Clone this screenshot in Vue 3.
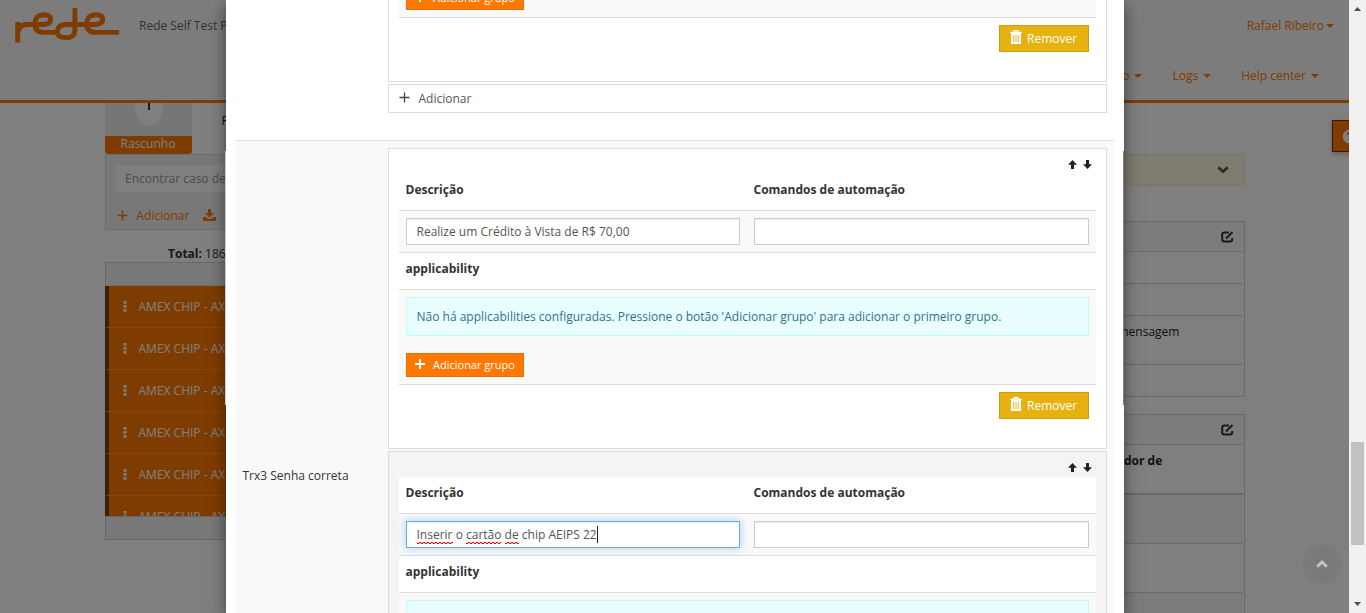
<script setup>
const cases = ['AMEX CHIP - AX', 'AMEX CHIP - AX', 'AMEX CHIP - AX', 'AMEX CHIP - AX', 'AMEX CHIP - AX', 'AMEX CHIP - AX']
const steps = [
  { words: [{ t: 'Realize um Crédito à Vista de R$ 70,00' }], active: false },
  {
    words: [
      { t: 'Inserir', bad: true }, { t: ' o ' }, { t: 'cartão', bad: true }, { t: ' ' },
      { t: 'de', bad: true }, { t: ' chip AEIPS 22' },
    ],
    active: true,
  },
]
</script>

<template>
  <div class="screen">
    <div class="page">
      <header class="top">
        <div class="brand">
          <svg class="logo" width="106" height="36" viewBox="0 0 106 36" fill="none" stroke="#ff7800" stroke-width="4.900">
            <path d="M3.700 34.500V14M3.700 27C3.700 19.500 7 16.500 13 16.500H27C34 16.500 36.700 14.500 36.700 11.400C36.700 8.200 34.500 6.800 30 6.800C23 6.800 20.800 11 20.800 15.700C20.800 21.500 24 24.400 30 24.400H43" />
            <path d="M60.900 0V21.500C60.900 27.500 58 29.600 52 29.600C45.500 29.600 43.400 27.500 43.400 24C43.400 19 47 16.500 53 16.500H79C86 16.500 88.700 14.500 88.700 11.400C88.700 8.200 86.500 6.800 82 6.800C75 6.800 72.600 11 72.600 15.700C72.600 21.500 76 24.400 82 24.400H105.200" />
          </svg>
          <span class="product">Rede Self Test Platform</span>
        </div>
        <div class="menus">
          <div class="user">Rafael Ribeiro<i class="caret near"></i></div>
          <nav class="nav">
            <span>Configuração<i class="caret"></i></span>
            <span>Logs<i class="caret"></i></span>
            <span>Help center<i class="caret"></i></span>
          </nav>
        </div>
      </header>

      <div class="columns">
        <aside class="left">
          <div class="tile-row">
            <div class="tile">
              <div class="disc-wrap"><div class="disc"><i></i></div></div>
              <div class="status">Rascunho</div>
            </div>
            <span class="tile-title">Rede</span>
          </div>
          <div class="finder">
            <div class="find">Encontrar caso de teste</div>
            <div class="links">
              <svg width="11" height="11" viewBox="0 0 11 11"><path d="M5.500 .5v10M.5 5.500h10" stroke="#ff7800" stroke-width="1.700" /></svg>
              <span class="add">Adicionar</span>
              <svg width="13" height="13" viewBox="0 0 13 13" fill="#ff7800"><path d="M5 0h3v4h3L6.500 8.500 2 4h3zM0 8h3l2 2h3l2-2h3v4H0z" /></svg>
              <span class="imp">Importar</span>
            </div>
          </div>
          <div class="total"><b>Total:</b> 186</div>
          <div class="list">
            <div class="list-head"></div>
            <div class="list-body">
              <div v-for="(c, i) in cases" :key="i" class="case">
                <svg width="4" height="11" viewBox="0 0 4 11" fill="#fff"><path d="M.5 0h3v2.700h-3zM.5 4h3v2.700h-3zM.5 8h3v2.700h-3z" /></svg>
                <span>{{ c }}</span>
              </div>
            </div>
            <div class="list-foot"></div>
          </div>
        </aside>

        <section class="right">
          <div class="notice">
            <svg width="12" height="8" viewBox="0 0 12 8" fill="none"><path d="M1.300 1.300 6 5.700l4.700-4.400" stroke="#6b5327" stroke-width="2.700" /></svg>
          </div>
          <div class="card one">
            <div class="card-head">
              <svg class="edit" width="13" height="12" viewBox="0 0 13 12" fill="none" stroke="#333"><path d="M8 1.500H3.500Q1.200 1.500 1.200 3.500v5q0 2 2 2h6q2 0 2-2V7" stroke-width="2" /><path d="M5 7.500 11.500 1" stroke-width="1.900" /></svg>
            </div>
            <div class="line l32"></div>
            <div class="line l32"></div>
            <div class="line l49"><span>mensagem</span></div>
          </div>
          <div class="card two">
            <div class="card-head">
              <svg class="edit" width="13" height="12" viewBox="0 0 13 12" fill="none" stroke="#333"><path d="M8 1.500H3.500Q1.200 1.500 1.200 3.500v5q0 2 2 2h6q2 0 2-2V7" stroke-width="2" /><path d="M5 7.500 11.500 1" stroke-width="1.900" /></svg>
            </div>
            <div class="line thick"><b>dor de</b></div>
            <div class="line l49 odd"></div>
            <div class="line l49"></div>
            <div class="line l49 odd"></div>
          </div>
        </section>
      </div>

      <div class="help">
        <svg width="15" height="15" viewBox="0 0 15 15"><circle cx="7.500" cy="7.500" r="6.700" fill="#fff" /><path d="M5.300 5.800Q5.500 3.700 7.600 3.700T9.700 5.600Q9.700 6.800 7.600 7.800V9M7.600 10v1.800" fill="none" stroke="#ff7800" stroke-width="1.800" /></svg>
      </div>
    </div>

    <div class="backdrop"></div>
    <div class="to-top">
      <svg width="12" height="8" viewBox="0 0 12 8" fill="none"><path d="M1.200 6.700 6 2l4.800 4.700" stroke="#c5c5c5" stroke-width="2.800" /></svg>
    </div>

    <div class="modal">
      <div class="item first">
        <div class="cut">
          <button class="btn"><svg width="10" height="10" viewBox="0 0 10 10"><path d="M5 0v10M0 5h10" stroke="#fff" stroke-width="2" /></svg>Adicionar grupo</button>
        </div>
        <button class="remove">
          <svg width="12" height="14" viewBox="0 0 12 14"><path d="M4 2V.6h4V2M0 2.500h12" fill="none" stroke="#fff" stroke-width="1.300" /><path d="M1 3h10v11H1z" fill="#fff" /><path d="M3.700 5v7M6 5v7M8.300 5v7" stroke="#e7b10f" stroke-width=".9" /></svg>Remover
        </button>
      </div>
      <div class="adder"><svg width="11" height="11" viewBox="0 0 11 11"><path d="M5.500 .5v10M.5 5.500h10" stroke="#444" stroke-width="1.300" /></svg>Adicionar</div>

      <div class="group">
        <div class="label">Trx3 Senha correta</div>
        <div class="items">
          <div v-for="(s, i) in steps" :key="i" class="item step" :class="{ active: s.active }">
            <div class="sort">
              <svg width="9" height="9" viewBox="0 0 9 9" fill="#222"><path d="M4.500 0 9 4.700H6V9H3V4.700H0z" /></svg>
              <svg width="9" height="9" viewBox="0 0 9 9" fill="#222"><path d="M4.500 9 9 4.300H6V0H3v4.300H0z" /></svg>
            </div>
            <div class="table">
              <div class="th two-col"><span>Descrição</span><span>Comandos de automação</span></div>
              <div class="td two-col fields">
                <div class="field" :class="{ focus: s.active }"><span v-for="(w, j) in s.words" :key="j" :class="{ bad: w.bad }">{{ w.t }}</span><i v-if="s.active" class="cursor"></i></div>
                <div class="field"></div>
              </div>
              <div class="th app"><span>applicability</span></div>
              <div class="td groups">
                <div class="info">Não há applicabilities configuradas. Pressione o botão 'Adicionar grupo' para adicionar o primeiro grupo.</div>
                <button class="btn"><svg width="10" height="10" viewBox="0 0 10 10"><path d="M5 0v10M0 5h10" stroke="#fff" stroke-width="2" /></svg>Adicionar grupo</button>
              </div>
            </div>
            <button class="remove">
              <svg width="12" height="14" viewBox="0 0 12 14"><path d="M4 2V.6h4V2M0 2.500h12" fill="none" stroke="#fff" stroke-width="1.300" /><path d="M1 3h10v11H1z" fill="#fff" /><path d="M3.700 5v7M6 5v7M8.300 5v7" stroke="#e7b10f" stroke-width=".9" /></svg>Remover
            </button>
          </div>
        </div>
      </div>
    </div>
    <i class="edge edge-l"></i>
    <i class="edge edge-r"></i>

    <div class="scrollbar">
      <svg width="7" height="4" viewBox="0 0 7 4"><path d="M3.500 0 7 4H0z" fill="#505050" /></svg>
      <div class="thumb"></div>
      <svg width="7" height="4" viewBox="0 0 7 4"><path d="M3.500 4 7 0H0z" fill="#505050" /></svg>
    </div>
  </div>
</template>

<style>
body { margin: 0; overflow: hidden; }
</style>

<style scoped>
* { box-sizing: border-box; }
.screen { position: relative; width: 1366px; height: 613px; overflow: hidden; background: #fff; font: 12px/18px "Open Sans", sans-serif; color: #333; white-space: nowrap; }
.page { position: relative; width: 1349px; height: 613px; overflow: hidden; }
.top { display: flex; justify-content: space-between; height: 103px; background: #f9f9f9; border-bottom: 3px solid #ff7800; }
.brand { display: flex; align-items: flex-start; padding: 8px 0 0 14px; }
.product { margin: 9px 0 0 19px; color: #666; }
.menus { color: #ff7800; text-align: right; }
.user { margin: 17px 15px 0 0; }
.nav { display: flex; gap: 30px; margin: 32px 30px 0 0; }
.caret { display: inline-block; border: 4px solid transparent; border-top-color: #ff7800; border-bottom: 0; margin-left: 5px; vertical-align: 2px; }
.caret.near { margin-left: 2px; }
.columns { display: flex; justify-content: space-between; padding: 0 104px 0 105px; }
.left { width: 300px; }
.tile-row { display: flex; height: 51px; }
.tile { width: 87px; background: #ededed; border-radius: 0 0 3px 3px; overflow: hidden; }
.disc-wrap { height: 33px; display: flex; justify-content: center; align-items: flex-end; padding-bottom: 10px; overflow: hidden; }
.disc { width: 30px; height: 50px; flex: none; border-radius: 50%; background: #fff; display: flex; justify-content: center; }
.disc i { width: 2px; height: 34px; background: #334; }
.status { height: 18px; line-height: 16px; background: #ff7800; color: #fff; text-align: center; padding-right: 1px; }
.tile-title { margin: 9px 0 0 29.500px; color: #222; }
.finder { height: 76px; border: 1px solid #d8d8d8; background: #f1f1f1; padding: 10px; }
.find { height: 27px; background: #fff; padding: 0 9px; line-height: 28px; color: #999; }
.links { display: flex; align-items: center; margin-top: 15px; color: #ff7800; height: 18px; padding-left: .5px; }
.links svg { margin-top: -2px; }
.links .add { margin: 0 13.500px 0 9px; }
.links .imp { margin-left: 8px; }
.total { padding: 15px 0 0 63px; height: 32px; }
.list { height: 278px; border: 1px solid #d0d0d0; background: #f1f1f1; }
.list-head { height: 23px; border-bottom: 1px solid #d8d8d8; }
.list-body { height: 230px; overflow: hidden; margin-left: -1px; }
.case { height: 42px; display: flex; align-items: center; background: #ff7800; border-left: 4px solid #7c3b00; border-bottom: 1px solid #ff942f; color: #fff; padding-left: 13.500px; }
.case span { margin-left: 12px; }
.list-foot { border-top: 1px solid #ccc; height: 23px; }
.right { width: 300px; padding-top: 51px; }
.notice { height: 32px; background: #fcf6e2; border: 1px solid #f5e8c8; display: flex; align-items: center; justify-content: flex-end; padding-right: 15.500px; }
.card { border: 1px solid #d5d5d5; background: #fff; }
.one { height: 176px; margin-top: 35px; }
.two { height: 220px; margin-top: 17px; }
.card-head { height: 30px; background: #f8f8f8; border-bottom: 1px solid #d8d8d8; display: flex; align-items: center; justify-content: flex-end; padding-right: 10px; }
.line { margin-right: 1px; border-bottom: 1px solid #d5d5d5; padding: 7px 0 0 175px; }
.l32 { height: 32px; }
.l49 { height: 49px; }
.line b, .line span { display: block; color: #222; }
.l49 span { margin-left: -3.500px; }
.thick { height: 50px; border-bottom-width: 2px; padding-left: 178px; }
.odd { background: #f7f7f7; }
.help { position: absolute; left: 1332px; top: 120px; width: 60px; height: 32px; padding: 8px 0 0 9px; background: #ff7800; border: 1px solid #633000; box-shadow: 0 2px 5px rgba(0,0,0,.25); }
.help svg { display: block; }
.backdrop { position: absolute; inset: 0; background: rgba(0,0,0,.5); }
.to-top { position: absolute; left: 1303px; top: 545px; width: 38px; height: 38px; border-radius: 50%; background: #7a7a7a; display: flex; align-items: center; justify-content: center; padding-bottom: 1px; }
.modal { position: absolute; left: 226px; top: 0; width: 898px; height: 613px; overflow: hidden; background: #fff; box-shadow: 0 5px 15px rgba(0,0,0,.5); }
.edge { position: absolute; top: 151px; height: 254px; width: 1px; }
.edge-l { left: 225px; background: #ccc; }
.edge-r { left: 1123px; background: #808080; }
.item { width: 719px; border: 1px solid #ddd; background: #fff; padding: 0 10px; }
.first { margin-left: 162px; height: 82px; border-top: 0; }
.cut { height: 18px; display: flex; flex-direction: column; justify-content: flex-end; padding: 0 7px 7px; background: #f9f9f9; border-bottom: 1px solid #ddd; }
.btn, .remove { font: 12px/18px "Open Sans", sans-serif; color: #fff; display: flex; align-items: center; padding: 0; }
.btn { flex: none; width: 118px; height: 24px; border: 1px solid #ea6e00; background: #ff7800; padding-left: 8px; font-size: 11px; }
.btn svg { margin: -2px 8px 0 0; }
.remove { margin: 7px 7px 0 auto; width: 90px; height: 27px; border: 1px solid #cf9e10; background: #e7b10f; padding-left: 10px; }
.remove svg { margin: -3px 5px 0 0; }
.adder { margin: 2px 0 0 162px; width: 719px; height: 29px; border: 1px solid #ddd; display: flex; align-items: center; padding-left: 10px; color: #555; }
.adder svg { margin: -2px 8.500px 0 0; }
.group { margin: 27px 10px 0; height: 610px; border-top: 1px solid #ddd; background: #f9f9f9; display: flex; }
.label { width: 152px; padding: 326px 0 0 6.500px; }
.items { padding-top: 7px; }
.step { height: 301px; margin-bottom: 2px; }
.sort { height: 25px; display: flex; justify-content: flex-end; gap: 6px; padding: 11px 4px 0 0; }
.active { background: #f4f4f4; }
.table { background: #fff; }
.th { height: 37px; padding: 7px 6.500px; font-weight: bold; border-bottom: 1px solid #ddd; }
.two-col { display: grid; grid-template-columns: 334px 335px; column-gap: 14px; }
.td { background: #f9f9f9; border-bottom: 1px solid #ddd; padding: 7px; }
.fields { height: 42px; }
.field { position: relative; height: 27px; border: 1px solid #ccc; background: #fff; box-shadow: inset 0 1px 1px rgba(0,0,0,.075); padding-left: 9.500px; line-height: 25px; color: #555; white-space: pre; }
.focus { border-color: #66afe9; box-shadow: inset 0 1px 1px rgba(0,0,0,.075), 0 0 8px rgba(102,175,233,.6); }
.bad {
  padding-bottom: 1px;
  background:
    linear-gradient(90deg, #f00 50%, rgba(255,0,0,.15) 50%) 0 100% / 4px 1px repeat-x,
    linear-gradient(90deg, rgba(255,0,0,.15) 50%, #f00 50%) 0 calc(100% - 1px) / 4px 1px repeat-x;
}
.cursor { display: inline-block; width: 1px; height: 17px; background: #222; vertical-align: -4px; }
.groups { height: 95px; }
.info { height: 39px; line-height: 37px; border: 1px solid #bffff0; background: #e9ffff; color: #31708f; padding-left: 9.500px; margin-bottom: 17px; }
.scrollbar { position: absolute; left: 1349px; top: 0; width: 17px; height: 613px; background: #f1f1f1; display: flex; flex-direction: column; align-items: center; padding-top: 7px; }
.scrollbar svg { flex: none; }
.thumb { width: 13px; height: 103px; background: #c1c1c1; margin: 431px 0 57px; }
</style>
